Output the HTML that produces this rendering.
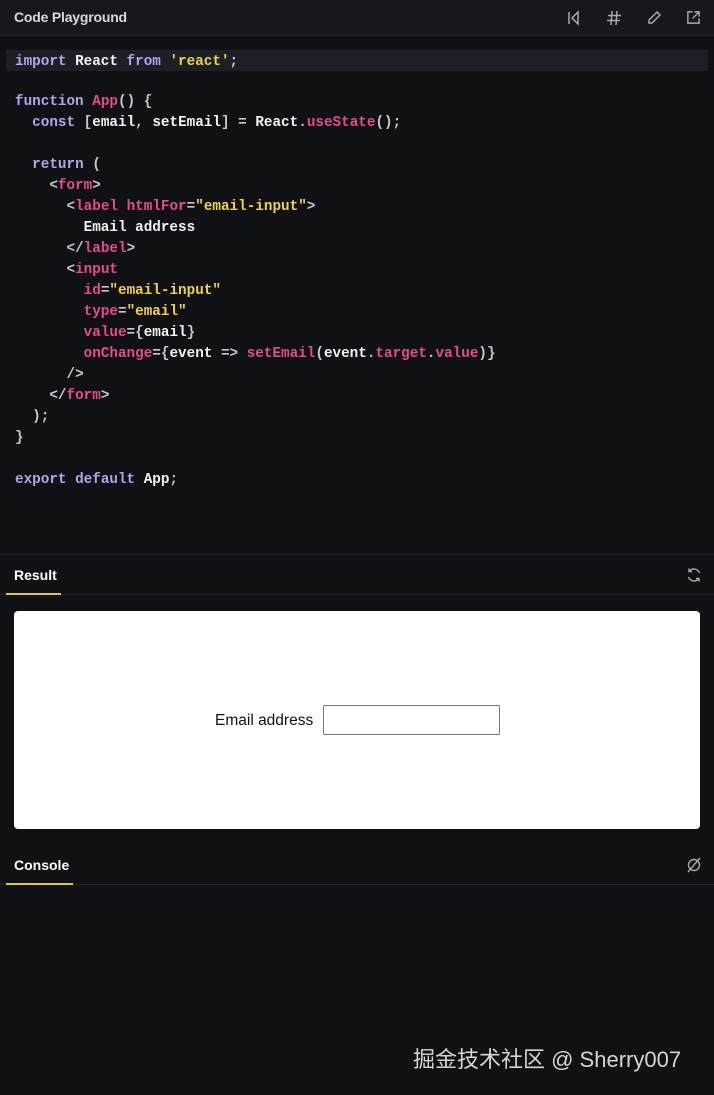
<!DOCTYPE html>
<html><head><meta charset="utf-8"><style>
html,body{margin:0;padding:0;background:#0f1115;width:714px;height:1095px;overflow:hidden}
body{font-family:"Liberation Sans",sans-serif;position:relative}
.hdr{position:absolute;left:0;top:0;width:714px;height:35px;background:#16181d;border-bottom:1px solid #24272e}
.hdr .t{position:absolute;left:14px;top:9px;color:#d7d9de;font-size:14px;font-weight:bold;letter-spacing:-0.2px}
.ic{position:absolute;top:10px}
pre{position:absolute;left:0;top:52px;margin:0;font-family:"Liberation Mono",monospace;font-size:14.3px;font-weight:bold;line-height:21px;color:#f2f2f4;width:714px}
pre .l{padding-left:15px;height:21px;white-space:pre}
pre .hl{background:#1c2026;margin:-2px 6px 0;padding-left:9px;padding-top:2px;height:19px}
.k{color:#b9a2ea}.p{color:#e54b8e}.s{color:#f3d04a}.g{color:#c8c8cc}
.sep{position:absolute;left:0;width:714px;height:1px;background:#22252c}
.tab{position:absolute;color:#fff;font-size:14px;font-weight:bold}
.ul{position:absolute;height:2px;background:#e3c440;z-index:2}
.res{position:absolute;left:14px;top:611px;width:686px;height:218px;background:#fff;border-radius:4px}
.lab{position:absolute;left:215px;top:712px;font-size:15.5px;color:#111}
.inp{position:absolute;left:323px;top:705px;width:175px;height:28px;border:1px solid #777;border-radius:2px;background:#fff}
.wm{position:absolute;left:413px;top:1042px;color:#d5d5d8;font-size:22px;font-family:"Liberation Sans","Noto Sans CJK SC",sans-serif}
</style></head><body>
<div class="hdr"><div class="t">Code Playground</div>
<svg class="ic" style="left:566px" width="16" height="16" viewBox="0 0 16 16" fill="none" stroke="#aaa" stroke-width="1.5"><path d="M3 2v12M12 2L6 8l6 6z"/></svg>
<svg class="ic" style="left:606px" width="16" height="16" viewBox="0 0 16 16" fill="none" stroke="#aaa" stroke-width="1.5"><path d="M6 1L5 15M11 1l-1 14M2 5.5h13M1 10.5h13"/></svg>
<svg class="ic" style="left:646px" width="16" height="16" viewBox="0 0 16 16" fill="none" stroke="#aaa" stroke-width="1.5"><path d="M11 2l3 3-8 8H3v-3z"/></svg>
<svg class="ic" style="left:686px" width="15" height="15" viewBox="0 0 16 16" fill="none" stroke="#aaa" stroke-width="1.5"><path d="M7 2H2v12h12V9M9 2h5v5M14 2L7 9"/></svg>
</div>
<pre><div class="l hl"><span class="k">import</span> React <span class="k">from</span> <span class="s">'react'</span><span class="g">;</span></div><div class="l"></div><div class="l"><span class="k">function</span> <span class="p">App</span><span class="g">() {</span></div><div class="l">  <span class="k">const</span> <span class="g">[</span>email<span class="g">,</span> setEmail<span class="g">] =</span> React<span class="g">.</span><span class="p">useState</span><span class="g">();</span></div><div class="l"></div><div class="l">  <span class="k">return</span> <span class="g">(</span></div><div class="l">    <span class="g">&lt;</span><span class="p">form</span><span class="g">&gt;</span></div><div class="l">      <span class="g">&lt;</span><span class="p">label</span> <span class="p">htmlFor</span><span class="g">=</span><span class="s">"email-input"</span><span class="g">&gt;</span></div><div class="l">        Email address</div><div class="l">      <span class="g">&lt;/</span><span class="p">label</span><span class="g">&gt;</span></div><div class="l">      <span class="g">&lt;</span><span class="p">input</span></div><div class="l">        <span class="p">id</span><span class="g">=</span><span class="s">"email-input"</span></div><div class="l">        <span class="p">type</span><span class="g">=</span><span class="s">"email"</span></div><div class="l">        <span class="p">value</span><span class="g">={</span>email<span class="g">}</span></div><div class="l">        <span class="p">onChange</span><span class="g">={</span>event <span class="g">=&gt;</span> <span class="p">setEmail</span><span class="g">(</span>event<span class="g">.</span><span class="p">target</span><span class="g">.</span><span class="p">value</span><span class="g">)}</span></div><div class="l">      <span class="g">/&gt;</span></div><div class="l">    <span class="g">&lt;/</span><span class="p">form</span><span class="g">&gt;</span></div><div class="l">  <span class="g">);</span></div><div class="l"><span class="g">}</span></div><div class="l"></div><div class="l"><span class="k">export</span> <span class="k">default</span> App<span class="g">;</span></div></pre>
<div class="sep" style="top:554px"></div>
<div class="tab" style="left:14px;top:567px">Result</div>
<div class="ul" style="left:6px;top:593px;width:55px"></div>
<div class="sep" style="top:594px"></div>
<svg style="position:absolute;left:686px;top:567px" width="16" height="16" viewBox="0 0 16 16" fill="none" stroke="#aaa" stroke-width="1.4"><path d="M13.5 6A6 6 0 0 0 3 4.5M2.5 10A6 6 0 0 0 13 11.5M3 1.5v3h3M13 14.5v-3h-3"/></svg>
<div class="res"></div>
<div class="lab">Email address</div>
<div class="inp"></div>
<div class="tab" style="left:14px;top:857px">Console</div>
<div class="ul" style="left:6px;top:883px;width:67px"></div>
<div class="sep" style="top:884px"></div>
<svg style="position:absolute;left:686px;top:857px" width="16" height="16" viewBox="0 0 16 16" fill="none" stroke="#aaa" stroke-width="1.4"><circle cx="8" cy="8" r="5.5"/><path d="M14 1L2 15"/></svg>
<div class="wm">掘金技术社区 @ Sherry007</div>
</body></html>
